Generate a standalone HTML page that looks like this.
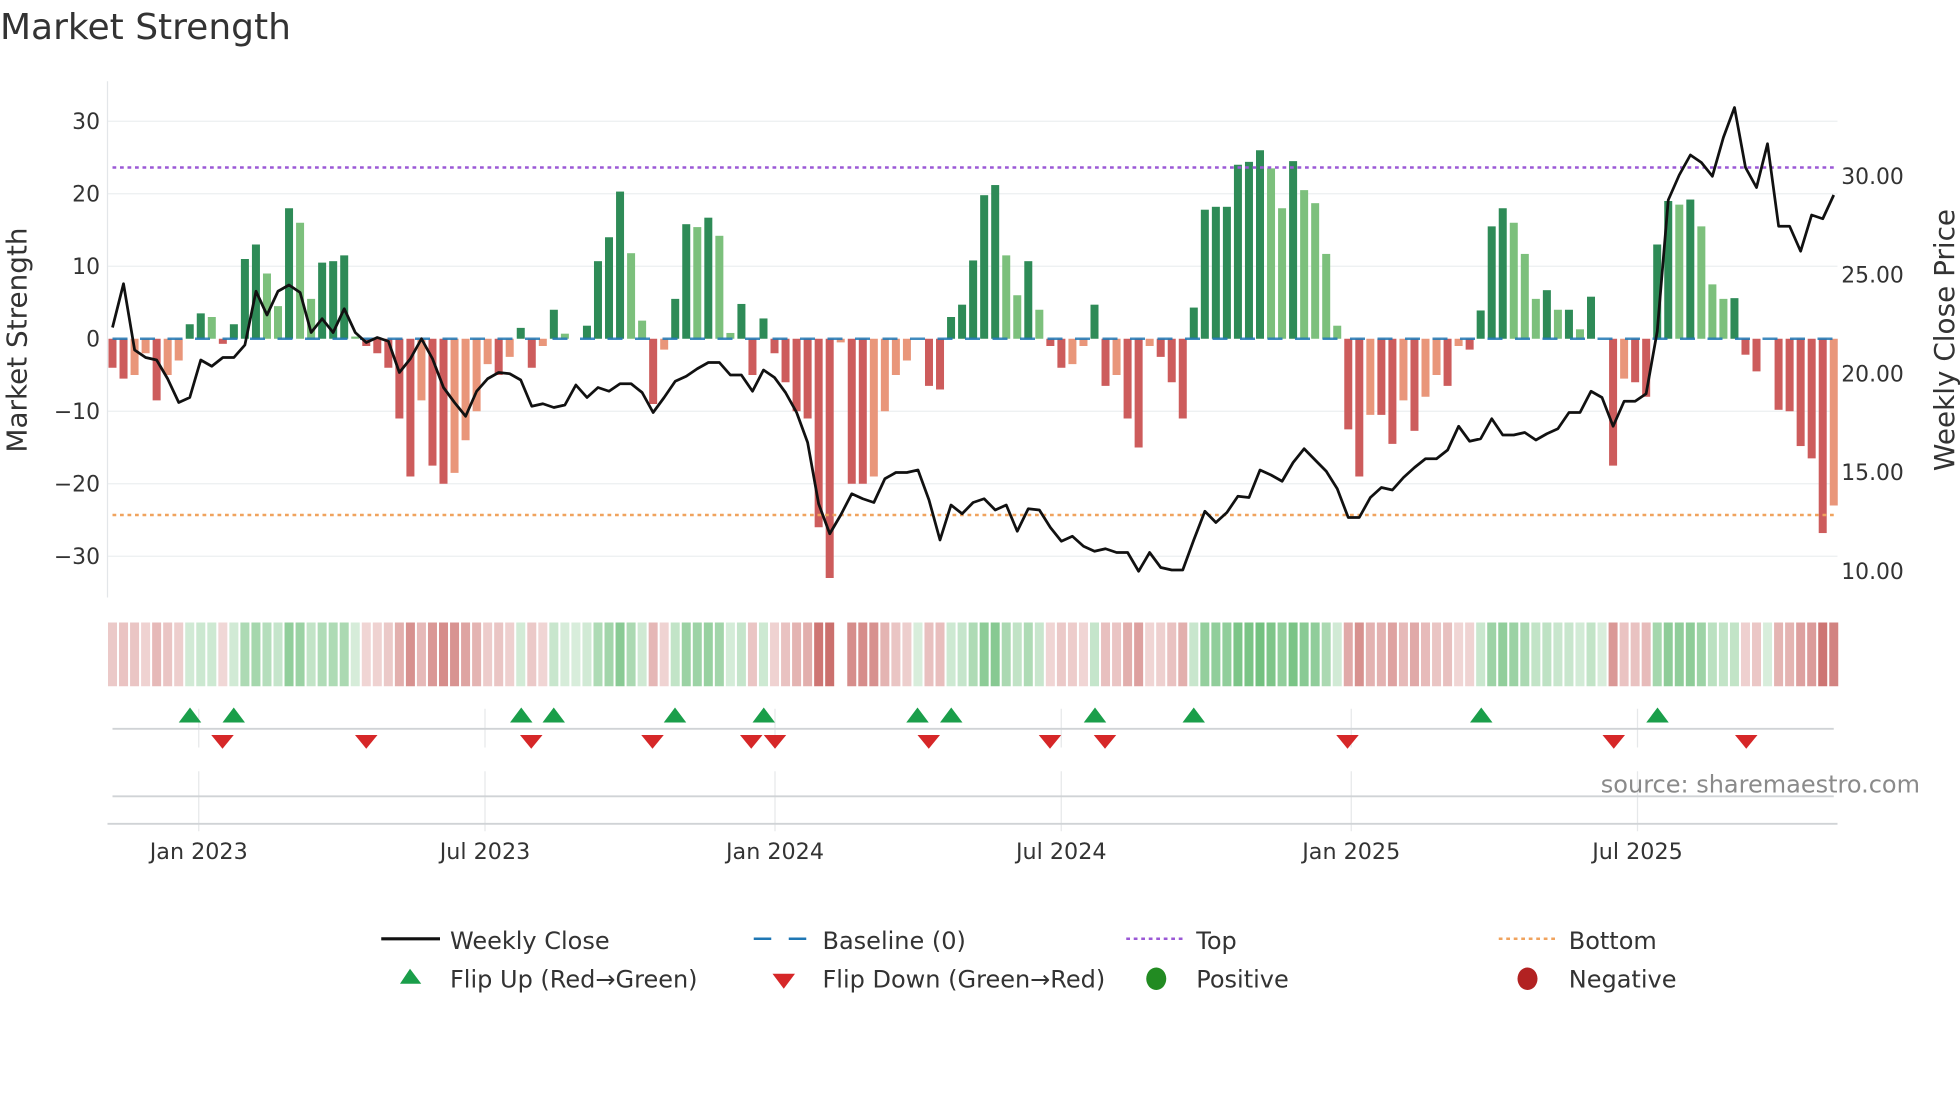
<!DOCTYPE html>
<html><head><meta charset="utf-8"><style>
html,body{margin:0;padding:0;background:#fff;width:1960px;height:1102px;overflow:hidden}
svg{display:block}
text{font-family:"DejaVu Sans","Liberation Sans",sans-serif;fill:#333}
</style></head><body>
<svg id="s" width="1960" height="1102" viewBox="0 0 1568 881.6" xmlns="http://www.w3.org/2000/svg">
<text x="0" y="31" font-size="28.8" fill="#333">Market Strength</text>
<g id="grid" stroke="#eceff1" stroke-width="1">
<line x1="86" x2="1470" y1="97" y2="97"/><line x1="86" x2="1470" y1="155" y2="155"/><line x1="86" x2="1470" y1="213" y2="213"/><line x1="86" x2="1470" y1="329" y2="329"/><line x1="86" x2="1470" y1="387" y2="387"/><line x1="86" x2="1470" y1="445" y2="445"/>
</g>
<line x1="86" x2="86" y1="65" y2="478" stroke="#e3e6e9" stroke-width="1"/>
<g font-size="17.5" text-anchor="end">
<text x="80" y="103">30</text><text x="80" y="161">20</text><text x="80" y="219">10</text><text x="80" y="277">0</text><text x="80" y="335">−10</text><text x="80" y="393">−20</text><text x="80" y="451">−30</text>
</g>
<g font-size="17.5">
<text x="1473" y="147">30.00</text><text x="1473" y="226">25.00</text><text x="1473" y="305">20.00</text><text x="1473" y="384">15.00</text><text x="1473" y="463">10.00</text>
</g>
<text transform="translate(21,272) rotate(-90)" font-size="22.3" text-anchor="middle">Market Strength</text>
<text transform="translate(1563,272) rotate(-90)" font-size="22.3" text-anchor="middle">Weekly Close Price</text>
<g id="bars"></g>
<line x1="90" x2="1468" y1="271" y2="271" stroke="#1f77b4" stroke-width="2" stroke-dasharray="12,10" opacity="0.85"/>
<line x1="90" x2="1468" y1="134" y2="134" stroke="#9b59d6" stroke-width="2" stroke-dasharray="3,3"/>
<line x1="90" x2="1468" y1="412" y2="412" stroke="#f0a35e" stroke-width="2" stroke-dasharray="3,3"/>
<polyline id="price" fill="none" stroke="#111" stroke-width="2.2" stroke-linejoin="round"/>
<g id="heat"></g>
<g stroke="#e6e8ea" stroke-width="1">
<line x1="159" x2="159" y1="567" y2="598"/><line x1="388" x2="388" y1="567" y2="598"/><line x1="620" x2="620" y1="567" y2="598"/><line x1="849" x2="849" y1="567" y2="598"/><line x1="1081" x2="1081" y1="567" y2="598"/><line x1="1310" x2="1310" y1="567" y2="598"/>
<line x1="159" x2="159" y1="617" y2="665"/><line x1="388" x2="388" y1="617" y2="665"/><line x1="620" x2="620" y1="617" y2="665"/><line x1="849" x2="849" y1="617" y2="665"/><line x1="1081" x2="1081" y1="617" y2="665"/><line x1="1310" x2="1310" y1="617" y2="665"/>
</g>
<line x1="90" x2="1467" y1="583" y2="583" stroke="#d0d3d6" stroke-width="1.5"/>
<line x1="90" x2="1467" y1="637" y2="637" stroke="#d0d3d6" stroke-width="1.5"/>
<line x1="86" x2="1470" y1="659" y2="659" stroke="#d0d3d6" stroke-width="1.5"/>
<g id="flips"></g>
<text x="1536" y="634" font-size="19.2" text-anchor="end" style="fill:#8a8a8a">source: sharemaestro.com</text>
<g font-size="17.8" text-anchor="middle">
<text x="159" y="687">Jan 2023</text><text x="388" y="687">Jul 2023</text><text x="620" y="687">Jan 2024</text><text x="849" y="687">Jul 2024</text><text x="1081" y="687">Jan 2025</text><text x="1310" y="687">Jul 2025</text>
</g>
<g font-size="19.2">
<line x1="305" x2="352" y1="751" y2="751" stroke="#111" stroke-width="2.5"/>
<text x="360" y="759">Weekly Close</text>
<line x1="603" x2="617" y1="751" y2="751" stroke="#1f77b4" stroke-width="2"/><line x1="631" x2="645" y1="751" y2="751" stroke="#1f77b4" stroke-width="2"/>
<text x="658" y="759">Baseline (0)</text>
<line x1="901" x2="946" y1="751" y2="751" stroke="#9b59d6" stroke-width="2" stroke-dasharray="3,3"/>
<text x="957" y="759">Top</text>
<line x1="1199" x2="1244" y1="751" y2="751" stroke="#f0a35e" stroke-width="2" stroke-dasharray="3,3"/>
<text x="1255" y="759">Bottom</text>
<polygon points="320,787 328,775 337,787" fill="#1a9e4a"/>
<text x="360" y="790">Flip Up (Red→Green)</text>
<polygon points="618,779 627,791 636,779" fill="#d62728"/>
<text x="658" y="790">Flip Down (Green→Red)</text>
<ellipse cx="925" cy="783" rx="8" ry="9" fill="#228b22"/>
<text x="957" y="790">Positive</text>
<ellipse cx="1222" cy="783" rx="8" ry="9" fill="#b22222"/>
<text x="1255" y="790">Negative</text>
</g>
</svg>
<script>
var NS="http://www.w3.org/2000/svg";
var v=[-4,-5.5,-5,-2,-8.5,-5,-3,2,3.5,3,-0.7,2,11,13,9,4.5,18,16,5.5,10.5,10.7,11.5,0.3,-1,-2,-4,-11,-19,-8.5,-17.5,-20,-18.5,-14,-10,-3.5,-5,-2.5,1.5,-4,-1,4,0.7,0,1.8,10.7,14,20.3,11.8,2.5,-9,-1.5,5.5,15.8,15.4,16.7,14.2,0.8,4.8,-5,2.8,-2,-6,-10,-11,-26,-33,-0.5,-20,-20,-19,-10,-5,-3,0,-6.5,-7,3,4.7,10.8,19.8,21.2,11.5,6,10.7,4,-1,-4,-3.5,-1,4.7,-6.5,-5,-11,-15,-1,-2.5,-6,-11,4.3,17.8,18.2,18.2,24,24.4,26,23.5,18,24.5,20.5,18.7,11.7,1.8,-12.5,-19,-10.5,-10.5,-14.5,-8.5,-12.7,-8,-5,-6.5,-1,-1.5,3.9,15.5,18,16,11.7,5.5,6.7,4,4,1.3,5.8,0,-17.5,-5.5,-6,-8,13,19,18.5,19.2,15.5,7.5,5.5,5.6,-2.2,-4.5,0,-9.8,-10,-14.8,-16.5,-26.8,-23];
var py=[262,227,280,286,288,303,322,318,288,293,286,286,276,233,252,233,228,234,266,255,266,247,266,274,270,273,298,287,271,287,310,322,333,313,303,298,299,304,325,323,326,324,308,318,310,313,307,307,314,330,318,305,301,295,290,290,300,300,313,296,302,314,330,354,403,427,412,395,399,402,383,378,378,376,400,432,404,411,402,399,408,404,425,407,408,422,433,429,437,441,439,442,442,457,442,454,456,456,432,409,418,410,397,398,376,380,385,370,359,368,377,391,414,414,398,390,392,382,374,367,367,360,341,353,351,335,348,348,346,352,347,343,330,330,313,318,341,321,321,315,265,160,140,124,130,141,110,86,134,150,115,181,181,201,172,175,156];
var n=v.length,x0=90,step=(1467-90)/(n-1);
var bars=document.getElementById('bars'),heat=document.getElementById('heat'),pts=[];
for(var i=0;i<n;i++){
 var x=x0+i*step,val=v[i],prev=i?v[i-1]:0;
 var dark=Math.abs(val)>=Math.abs(prev)||Math.sign(val)!=Math.sign(prev);
 var col=val>=0?(dark?'#2e8b57':'#7cc07c'):(dark?'#cd5c5c':'#e9967a');
 if(Math.abs(val)>0.05){var r=document.createElementNS(NS,'rect');var h=Math.abs(val)*5.8;
 r.setAttribute('x',x-3.2);r.setAttribute('width',6.4);r.setAttribute('y',val>=0?271-h:271);r.setAttribute('height',h);r.setAttribute('fill',col);bars.appendChild(r);}
 if(i!=66){var hr=document.createElementNS(NS,'rect');
 hr.setAttribute('x',x-3.6);hr.setAttribute('width',7.2);hr.setAttribute('y',498);hr.setAttribute('height',51);
 hr.setAttribute('fill',val>=0?'#4caf5c':'#c0504d');hr.setAttribute('fill-opacity',(0.22+0.6*Math.min(1,Math.abs(val)/28)).toFixed(2));heat.appendChild(hr);}
 pts.push(x.toFixed(1)+','+py[i]);
}
document.getElementById('price').setAttribute('points',pts.join(' '));
var up=[152,187,417,443,540,611,734,761,876,955,1185,1326],dn=[178,293,425,522,601,620,743,840,884,1078,1291,1397];
var f=document.getElementById('flips');
up.forEach(function(x){var p=document.createElementNS(NS,'polygon');p.setAttribute('points',(x-9)+',578 '+x+',566 '+(x+9)+',578');p.setAttribute('fill','#1a9e4a');f.appendChild(p);});
dn.forEach(function(x){var p=document.createElementNS(NS,'polygon');p.setAttribute('points',(x-9)+',588 '+x+',599 '+(x+9)+',588');p.setAttribute('fill','#d62728');f.appendChild(p);});
</script>
</body></html>
